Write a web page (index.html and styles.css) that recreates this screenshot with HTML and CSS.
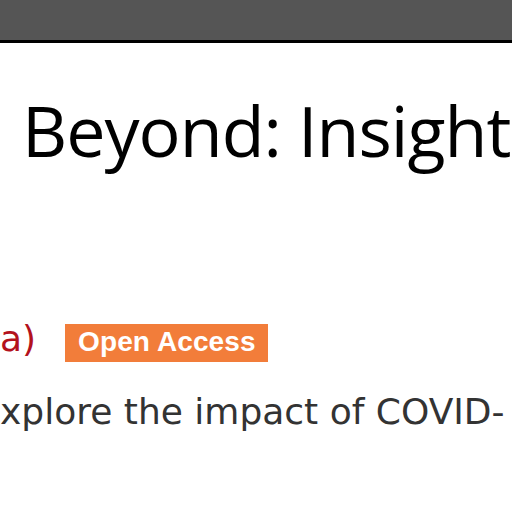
FILE: index.html
```html
<!DOCTYPE html>
<html lang="en">
<head>
<meta charset="utf-8">
<title>Beyond: Insights</title>
<link rel="stylesheet" href="styles.css">
</head>
<body>
<header class="topbar"></header>
<main class="content">
  <h1 class="title">Beyond: Insight</h1>
  <div class="meta">
    <span class="source">a)</span>
    <span class="badge">Open Access</span>
  </div>
  <p class="summary">xplore the impact of COVID-</p>
</main>
</body>
</html>
```

FILE: styles.css
```css
html, body {
  margin: 0;
  padding: 0;
  background: #ffffff;
}
body {
  width: 512px;
  height: 512px;
  overflow: hidden;
}
.topbar {
  height: 40px;
  background: #555555;
  border-bottom: 3px solid #000000;
}
.content {
  white-space: nowrap;
}
.title {
  margin: 52px 0 0 0;
  padding-left: 22px;
  height: 70px;
  font-family: "Open Sans", sans-serif;
  font-weight: 400;
  font-size: 70px;
  line-height: 70px;
  letter-spacing: -1px;
  color: #000000;
}
.meta {
  display: flex;
  align-items: baseline;
  gap: 29px;
  margin-top: 155px;
}
.source {
  font-family: "DejaVu Sans", sans-serif;
  font-size: 36px;
  line-height: 38px;
  color: #b3121d;
}
.badge {
  font-family: "Liberation Sans", Arial, sans-serif;
  font-weight: 700;
  font-size: 28px;
  line-height: 32px;
  letter-spacing: 0.1px;
  padding: 2px 12px 4px 13px;
  background: #f27d3a;
  color: #ffffff;
}
.summary {
  margin: 30px 0 0 0;
  font-family: "DejaVu Sans", sans-serif;
  font-size: 36px;
  line-height: 40px;
  color: #333333;
}
```
